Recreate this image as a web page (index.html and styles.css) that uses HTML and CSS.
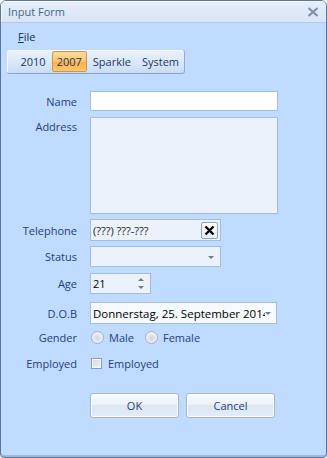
FILE: index.html
```html
<!DOCTYPE html>
<html>
<head>
<meta charset="utf-8">
<link rel="stylesheet" href="styles.css">
</head>
<body>
<div class="window">
  <div class="titlebar">
    <span class="title">Input Form</span>
    <svg class="close" width="12" height="10" viewBox="0 0 12 10"><path d="M1.5 1 L10.5 9 M10.5 1 L1.5 9" stroke="#8190a8" stroke-width="2.2" fill="none"/></svg>
  </div>
  <div class="client">
    <div class="menubar"><span class="menu-item"><u>F</u>ile</span></div>
    <div class="toolbar">
      <span class="grip"></span>
      <span class="tb-item">2010</span>
      <span class="tb-item active">2007</span>
      <span class="tb-item">Sparkle</span>
      <span class="tb-item">System</span>
    </div>
    <div class="form">
      <div class="row r-name">
        <label class="lbl">Name</label>
        <div class="box name-box"></div>
      </div>
      <div class="row r-addr">
        <label class="lbl top">Address</label>
        <div class="box addr-box"></div>
      </div>
      <div class="row r-tel">
        <label class="lbl">Telephone</label>
        <div class="box tel-box"><span class="val">(???) ???-???</span>
          <span class="clear-btn"><svg width="11" height="11" viewBox="0 0 11 11"><path d="M1.5 1.5 L9.5 9.5 M9.5 1.5 L1.5 9.5" stroke="#000" stroke-width="2.3" fill="none"/></svg></span>
        </div>
      </div>
      <div class="row r-status">
        <label class="lbl">Status</label>
        <div class="box status-box"><span class="val"></span><span class="arrow"></span></div>
      </div>
      <div class="row r-age">
        <label class="lbl">Age</label>
        <div class="box age-box"><span class="val dark">21</span>
          <span class="spin"><span class="up"></span><span class="down"></span></span>
        </div>
      </div>
      <div class="row r-dob">
        <label class="lbl">D.O.B</label>
        <div class="box dob-box"><span class="val dark clip">Donnerstag, 25. September 2014</span><span class="arrow"></span></div>
      </div>
      <div class="row r-gender">
        <label class="lbl">Gender</label>
        <div class="opts">
          <span class="radio"></span><span class="opt-text">Male</span>
          <span class="radio r2"></span><span class="opt-text">Female</span>
        </div>
      </div>
      <div class="row r-emp">
        <label class="lbl">Employed</label>
        <div class="opts">
          <span class="check"></span><span class="opt-text">Employed</span>
        </div>
      </div>
      <div class="row r-btns">
        <span class="spacer"></span>
        <div class="buttons">
          <button class="btn">OK</button>
          <button class="btn">Cancel</button>
        </div>
      </div>
    </div>
  </div>
</div>
</body>
</html>
```

FILE: styles.css
```css
html, body {
  margin: 0;
  padding: 0;
  background: #ffffff;
}
body {
  font-family: "Open Sans", "Noto Sans", sans-serif;
  font-size: 11px;
}
.window {
  width: 327px;
  height: 458px;
  box-sizing: border-box;
  border: 1px solid #5f7596;
  border-radius: 6px 6px 4px 4px;
  background: #bfdbff;
  display: flex;
  flex-direction: column;
  overflow: hidden;
  box-shadow: inset 0 -2px 0 #9fb9dc;
}
.titlebar {
  height: 21px;
  border-bottom: 1px solid #b5c9e4;
  background: linear-gradient(#e6eef9, #d8e5f6);
  display: flex;
  align-items: center;
  justify-content: space-between;
  padding: 0 7px 0 7px;
  box-shadow: inset 1px 1px 0 #f4f8fd;
}
.title {
  color: #4a6488;
  font-size: 11px;
}
.close {
  display: block;
  margin-top: 1px;
}
.client {
  flex: 1;
  display: flex;
  flex-direction: column;
}
.menubar {
  height: 20px;
  padding-top: 3px;
  padding-left: 17px;
  display: flex;
  align-items: center;
}
.menu-item {
  color: #15315e;
  font-size: 11px;
}
.toolbar {
  margin-top: 4px;
  margin-left: 6px;
  width: 178px;
  height: 24px;
  box-sizing: border-box;
  border-radius: 3px;
  background: linear-gradient(#eaf2fd, #dbe8f9 50%, #c9dcf5);
  border-right: 1px solid #92abcc;
  border-bottom: 1px solid #8aa3c6;
  box-shadow: inset 1px 1px 0 #f5f9ff;
  display: flex;
  align-items: center;
  gap: 1px;
}
.grip {
  width: 2px;
  height: 14px;
  margin-left: 2px;
  margin-right: 5px;
  background-image: radial-gradient(circle, #6f86a8 0.9px, transparent 1.1px);
  background-size: 2px 3px;
}
.tb-item {
  padding: 0 4px;
  height: 21px;
  line-height: 19px;
  color: #1b3767;
  font-size: 11px;
  box-sizing: border-box;
  border: 1px solid transparent;
  border-radius: 2px;
}
.tb-item.active {
  background: linear-gradient(#ffdca0, #ffc46a 50%, #ffb040 51%, #ffc870);
  border-color: #c59a50;
}
.form {
  margin-top: 17px;
  display: flex;
  flex-direction: column;
}
.row {
  display: flex;
  gap: 13px;
  align-items: center;
}
.lbl {
  width: 76px;
  text-align: right;
  color: #1f3f78;
  font-size: 11px;
  flex: none;
}
.lbl.top {
  align-self: flex-start;
  padding-top: 2px;
}
.box {
  box-sizing: border-box;
  border: 1px solid #a5bcda;
  background: #ebf2fc;
  display: flex;
  align-items: center;
  position: relative;
}
.val {
  padding-left: 2px;
  color: #1a1a1a;
  font-size: 11px;
  flex: 1;
  white-space: nowrap;
}
.val.dark { color: #000; }
.val.clip {
  overflow: hidden;
  max-width: 172px;
  flex: none;
  font-size: 11.5px;
}
.name-box { width: 188px; height: 20px; background: #ffffff; }
.r-addr { margin-top: 6px; }
.addr-box { width: 188px; height: 97px; }
.r-tel { margin-top: 5px; }
.tel-box { width: 131px; height: 22px; }
.clear-btn {
  width: 17px;
  height: 17px;
  box-sizing: border-box;
  border: 1px solid #8fa3bf;
  border-radius: 2px;
  background: linear-gradient(#ffffff, #e4edf8);
  display: flex;
  align-items: center;
  justify-content: center;
  margin-right: 2px;
}
.clear-btn svg { display: block; }
.r-status { margin-top: 5px; }
.status-box { width: 131px; height: 21px; }
.arrow {
  width: 0;
  height: 0;
  border-left: 3px solid transparent;
  border-right: 3px solid transparent;
  border-top: 3px solid #6b7b92;
  margin-right: 6px;
  margin-top: 1px;
}
.r-age { margin-top: 6px; }
.age-box { width: 61px; height: 21px; }
.spin {
  display: flex;
  flex-direction: column;
  gap: 5px;
  margin-right: 6px;
}
.spin .up {
  width: 0; height: 0;
  border-left: 3px solid transparent;
  border-right: 3px solid transparent;
  border-bottom: 3px solid #6b7b92;
}
.spin .down {
  width: 0; height: 0;
  border-left: 3px solid transparent;
  border-right: 3px solid transparent;
  border-top: 3px solid #6b7b92;
}
.r-dob { margin-top: 8px; }
.dob-box { width: 187px; height: 22px; background: #f6f9fe; justify-content: space-between; }
.r-gender { margin-top: 4px; height: 18px; }
.r-emp { margin-top: 8px; height: 18px; }
.opts {
  display: flex;
  align-items: center;
}
.opt-text {
  color: #1f3f78;
  font-size: 11px;
}
.radio {
  width: 11px;
  height: 11px;
  border-radius: 50%;
  border: 1px solid #a3b1c4;
  background: radial-gradient(circle at 50% 55%, #cfd5de 0, #e6e9ee 45%, #f8f9fb 100%);
  margin-left: 1px;
  margin-right: 5px;
}
.radio.r2 { margin-left: 11px; }
.check {
  width: 9px;
  height: 9px;
  border: 1px solid #8e9cb2;
  background: linear-gradient(135deg, #d2d7df, #f3f5f8);
  box-shadow: inset 0 0 0 1px #f4f6f9;
  margin-left: 1px;
  margin-right: 6px;
}
.r-btns { margin-top: 21px; }
.spacer { width: 76px; flex: none; }
.buttons {
  display: flex;
  gap: 7px;
}
.btn {
  width: 89px;
  height: 25px;
  box-sizing: border-box;
  border: 1px solid #a6b7cd;
  border-radius: 3px;
  background: linear-gradient(#f9fbfe, #edf2f9 45%, #dde7f3 50%, #e3ecf7);
  color: #1f3f78;
  font-family: "Open Sans", "Noto Sans", sans-serif;
  font-size: 11px;
  padding: 0;
  box-shadow: inset 0 0 0 1px #ffffff;
}
```
